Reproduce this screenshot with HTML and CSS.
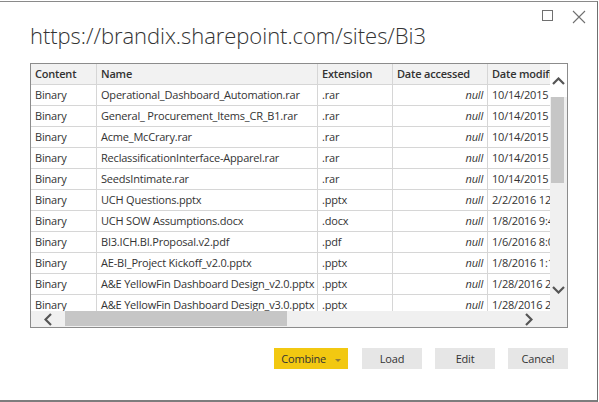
FILE: index.html
```html
<!DOCTYPE html>
<html lang="en">
<head>
    <meta charset="UTF-8">
    <title>Navigator</title>
    <link rel="stylesheet" href="styles.css">
</head>
<body>
    <div class="dialog">
        <!-- Title + window buttons -->
        <div class="dialog-header">
            <h1 class="dialog-title">https://brandix.sharepoint.com/sites/Bi3</h1>
            <div class="window-controls">
                <svg class="ctl-max" width="12" height="12" viewBox="0 0 12 12">
                    <rect x="0.5" y="0.5" width="10" height="10" fill="none" stroke="#707070" stroke-width="1"/>
                </svg>
                <svg class="ctl-close" width="14" height="14" viewBox="0 0 14 14">
                    <path d="M1 1 L13 13 M13 1 L1 13" stroke="#707070" stroke-width="1.1" fill="none"/>
                </svg>
            </div>
        </div>

        <!-- Preview grid -->
        <div class="grid-frame">
            <div class="grid-view">
                <div class="row head">
                    <div class="cell c-content">Content</div>
                    <div class="cell c-name">Name</div>
                    <div class="cell c-ext">Extension</div>
                    <div class="cell c-acc">Date accessed</div>
                    <div class="cell c-mod">Date modified</div>
                </div>
                <div class="row">
                    <div class="cell c-content">Binary</div>
                    <div class="cell c-name">Operational_Dashboard_Automation.rar</div>
                    <div class="cell c-ext">.rar</div>
                    <div class="cell c-acc null">null</div>
                    <div class="cell c-mod">10/14/2015 3:22:41 PM</div>
                </div>
                <div class="row">
                    <div class="cell c-content">Binary</div>
                    <div class="cell c-name">General_ Procurement_Items_CR_B1.rar</div>
                    <div class="cell c-ext">.rar</div>
                    <div class="cell c-acc null">null</div>
                    <div class="cell c-mod">10/14/2015 3:22:43 PM</div>
                </div>
                <div class="row">
                    <div class="cell c-content">Binary</div>
                    <div class="cell c-name">Acme_McCrary.rar</div>
                    <div class="cell c-ext">.rar</div>
                    <div class="cell c-acc null">null</div>
                    <div class="cell c-mod">10/14/2015 3:22:44 PM</div>
                </div>
                <div class="row">
                    <div class="cell c-content">Binary</div>
                    <div class="cell c-name">ReclassificationInterface-Apparel.rar</div>
                    <div class="cell c-ext">.rar</div>
                    <div class="cell c-acc null">null</div>
                    <div class="cell c-mod">10/14/2015 3:22:46 PM</div>
                </div>
                <div class="row">
                    <div class="cell c-content">Binary</div>
                    <div class="cell c-name">SeedsIntimate.rar</div>
                    <div class="cell c-ext">.rar</div>
                    <div class="cell c-acc null">null</div>
                    <div class="cell c-mod">10/14/2015 3:22:47 PM</div>
                </div>
                <div class="row">
                    <div class="cell c-content">Binary</div>
                    <div class="cell c-name">UCH Questions.pptx</div>
                    <div class="cell c-ext">.pptx</div>
                    <div class="cell c-acc null">null</div>
                    <div class="cell c-mod">2/2/2016 12:10:05 PM</div>
                </div>
                <div class="row">
                    <div class="cell c-content">Binary</div>
                    <div class="cell c-name">UCH SOW Assumptions.docx</div>
                    <div class="cell c-ext">.docx</div>
                    <div class="cell c-acc null">null</div>
                    <div class="cell c-mod">1/8/2016 9:41:12 AM</div>
                </div>
                <div class="row">
                    <div class="cell c-content">Binary</div>
                    <div class="cell c-name">BI3.ICH.BI.Proposal.v2.pdf</div>
                    <div class="cell c-ext">.pdf</div>
                    <div class="cell c-acc null">null</div>
                    <div class="cell c-mod">1/6/2016 8:02:30 AM</div>
                </div>
                <div class="row">
                    <div class="cell c-content">Binary</div>
                    <div class="cell c-name">AE-BI_Project Kickoff_v2.0.pptx</div>
                    <div class="cell c-ext">.pptx</div>
                    <div class="cell c-acc null">null</div>
                    <div class="cell c-mod">1/8/2016 1:15:54 PM</div>
                </div>
                <div class="row">
                    <div class="cell c-content">Binary</div>
                    <div class="cell c-name">A&amp;E YellowFin Dashboard Design_v2.0.pptx</div>
                    <div class="cell c-ext">.pptx</div>
                    <div class="cell c-acc null">null</div>
                    <div class="cell c-mod">1/28/2016 2:33:19 PM</div>
                </div>
                <div class="row">
                    <div class="cell c-content">Binary</div>
                    <div class="cell c-name">A&amp;E YellowFin Dashboard Design_v3.0.pptx</div>
                    <div class="cell c-ext">.pptx</div>
                    <div class="cell c-acc null">null</div>
                    <div class="cell c-mod">1/28/2016 2:35:02 PM</div>
                </div>
            </div>

            <div class="vscroll">
                <div class="sb-btn sb-up">
                    <svg width="13" height="8" viewBox="0 0 13 8"><path d="M1 7 L6.5 1.5 L12 7" stroke="#555" stroke-width="2.2" fill="none"/></svg>
                </div>
                <div class="sb-thumb-v"></div>
                <div class="sb-fill"></div>
                <div class="sb-btn sb-down">
                    <svg width="13" height="8" viewBox="0 0 13 8"><path d="M1 1 L6.5 6.5 L12 1" stroke="#555" stroke-width="2.2" fill="none"/></svg>
                </div>
            </div>

            <div class="hscroll">
                <div class="sb-btn sb-left">
                    <svg width="8" height="13" viewBox="0 0 8 13"><path d="M7 1 L1.5 6.5 L7 12" stroke="#555" stroke-width="2.2" fill="none"/></svg>
                </div>
                <div class="sb-thumb-h"></div>
                <div class="sb-fill"></div>
                <div class="sb-btn sb-right">
                    <svg width="8" height="13" viewBox="0 0 8 13"><path d="M1 1 L6.5 6.5 L1 12" stroke="#555" stroke-width="2.2" fill="none"/></svg>
                </div>
            </div>
        </div>

        <!-- Footer buttons -->
        <div class="actions">
            <button class="btn btn-combine">Combine <span class="caret"></span></button>
            <button class="btn">Load</button>
            <button class="btn">Edit</button>
            <button class="btn">Cancel</button>
        </div>
    </div>
</body>
</html>
```

FILE: styles.css
```css
body {
    margin: 0;
    padding: 0;
    background: #fff;
    font-family: 'Open Sans', 'Noto Sans', sans-serif;
    color: #333;
}

.dialog {
    margin-top: 1px;
    width: 598px;
    height: 401px;
    box-sizing: border-box;
    border-top: 1px solid #8a8a8a;
    border-right: 1px solid #6f6f6f;
    border-bottom: 2px solid #7d7d7d;
    background: #fff;
}

/* header */

.dialog-header {
    display: flex;
    justify-content: space-between;
    align-items: flex-start;
    padding: 0 11px 0 30px;
}

.dialog-title {
    margin: 18px 0 0 0;
    font-size: 22px;
    line-height: 30px;
    font-weight: 300;
    letter-spacing: -0.05px;
    color: #333;
    white-space: nowrap;
}

.window-controls {
    display: flex;
    gap: 18px;
    margin-top: 8px;
}

.window-controls svg {
    display: block;
}

/* grid */

.grid-frame {
    margin: 13px 0 0 30px;
    width: 538px;
    height: 265px;
    box-sizing: border-box;
    border: 1px solid #8c8c8c;
    display: grid;
    grid-template-columns: 519px 17px;
    grid-template-rows: 247px 16px;
    overflow: hidden;
}

.grid-view {
    overflow: hidden;
    font-size: 11px;
    letter-spacing: -0.2px;
}

.row {
    display: flex;
    height: 21px;
    width: max-content;
}

.cell {
    box-sizing: border-box;
    height: 21px;
    line-height: 20px;
    padding: 0 4px;
    border-right: 1px solid #d6d6d6;
    border-bottom: 1px solid #d6d6d6;
    white-space: nowrap;
    overflow: hidden;
    text-overflow: clip;
    flex-shrink: 0;
}

.head .cell {
    background: #f2f2f2;
    font-weight: 600;
    color: #333;
}

.c-content { width: 66px; }
.c-name    { width: 221px; }
.c-ext     { width: 75px; }
.c-acc     { width: 95px; }
.c-mod     { width: 140px; }

.null {
    text-align: right;
    font-style: italic;
}

/* scrollbars */

.vscroll {
    display: flex;
    flex-direction: column;
    background: #f0f0f0;
}

.hscroll {
    grid-column: 1 / -1;
    display: flex;
    background: #f0f0f0;
}

.sb-btn {
    display: flex;
    align-items: center;
    justify-content: center;
}

.sb-btn svg {
    display: block;
}

.sb-up {
    height: 33px;
    background: #fff;
}

.sb-thumb-v {
    width: 13px;
    height: 86px;
    margin-left: 1px;
    background: #c6c6c6;
}

.sb-fill {
    flex: 1;
}

.sb-down {
    height: 26px;
    margin-bottom: 8px;
}

.sb-left {
    width: 34px;
}

.sb-thumb-h {
    width: 222px;
    height: 15px;
    background: #c6c6c6;
}

.sb-right {
    width: 26px;
    margin-right: 25px;
}

/* footer */

.actions {
    display: flex;
    justify-content: flex-end;
    gap: 13px;
    margin-top: 20px;
    padding-right: 29px;
}

.btn {
    width: 60px;
    height: 21px;
    padding: 0;
    border: none;
    background: #e6e6e6;
    font-family: 'Open Sans', 'Noto Sans', sans-serif;
    font-size: 11px;
    letter-spacing: -0.2px;
    color: #333;
}

.btn-combine {
    width: 74px;
    margin-right: 1px;
    background: #f2c811;
}

.caret {
    display: inline-block;
    margin-left: 6px;
    vertical-align: middle;
    border-left: 3px solid transparent;
    border-right: 3px solid transparent;
    border-top: 3px solid #8c7a3a;
}
```
